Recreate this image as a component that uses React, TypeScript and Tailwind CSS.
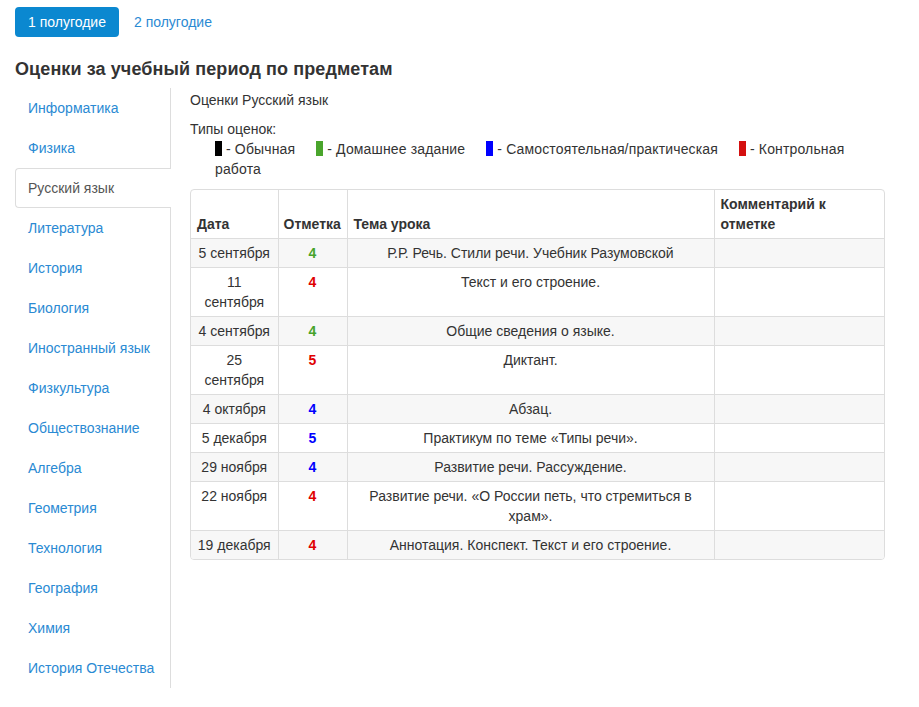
import React from "react";

const subjects = [
  "Информатика",
  "Физика",
  "Русский язык",
  "Литература",
  "История",
  "Биология",
  "Иностранный язык",
  "Физкультура",
  "Обществознание",
  "Алгебра",
  "Геометрия",
  "Технология",
  "География",
  "Химия",
  "История Отечества",
];

type Row = { date: string; mark: string; color: string; topic: string };

const GREEN = "text-[#46a32a]";
const RED = "text-[#e00000]";
const BLUE = "text-[#0000ff]";

const rows: Row[] = [
  { date: "5 сентября", mark: "4", color: GREEN, topic: "Р.Р. Речь. Стили речи. Учебник Разумовской" },
  { date: "11 сентября", mark: "4", color: RED, topic: "Текст и его строение." },
  { date: "4 сентября", mark: "4", color: GREEN, topic: "Общие сведения о языке." },
  { date: "25 сентября", mark: "5", color: RED, topic: "Диктант." },
  { date: "4 октября", mark: "4", color: BLUE, topic: "Абзац." },
  { date: "5 декабря", mark: "5", color: BLUE, topic: "Практикум по теме «Типы речи»." },
  { date: "29 ноября", mark: "4", color: BLUE, topic: "Развитие речи. Рассуждение." },
  { date: "22 ноября", mark: "4", color: RED, topic: "Развитие речи. «О России петь, что стремиться в храм»." },
  { date: "19 декабря", mark: "4", color: RED, topic: "Аннотация. Конспект. Текст и его строение." },
];

export default function App() {
  return (
    <div
      className="min-h-[707px] bg-white px-[15px] pt-[7px] text-[14px] leading-[20px] text-[#333]"
      style={{ fontFamily: '"Liberation Sans", Arial, sans-serif' }}
    >
      <div className="flex items-center">
        <div className="rounded-[4px] bg-[#0b88d0] px-[13px] py-[5px] text-white">1 полугодие</div>
        <div className="ml-[2px] px-[13px] py-[5px] text-[#2a8ad3]">2 полугодие</div>
      </div>

      <h2 className="mt-[22px] mb-[9px] text-[18px] font-bold leading-[20px] tracking-[0.1px] text-[#333]">
        Оценки за учебный период по предметам
      </h2>

      <div className="flex items-start">
        <ul className="w-[156px] shrink-0 border-r border-[#ddd]">
          {subjects.map((s) => {
            const active = s === "Русский язык";
            return (
              <li
                key={s}
                className={
                  active
                    ? "-mr-px rounded-l-[4px] border border-r-0 border-[#ddd] bg-white px-[12px] py-[9px] text-[#555]"
                    : "-mr-px border border-transparent px-[12px] py-[9px] text-[#2a8ad3]"
                }
              >
                {s}
              </li>
            );
          })}
        </ul>

        <div className="w-[714px] pl-[19px]">
          <p className="mt-[2px]">Оценки Русский язык</p>
          <p className="mt-[9px]">Типы оценок:</p>
          <div className="pl-[25px] pr-[30px] tracking-[0.15px]">
            <span className="mr-[21px] whitespace-nowrap">
              <span className="mr-[4px] inline-block h-[15px] w-[7px] bg-black align-[-2px]" />- Обычная
            </span>
            <span className="mr-[21px] whitespace-nowrap">
              <span className="mr-[4px] inline-block h-[15px] w-[7px] bg-[#4aa52c] align-[-2px]" />- Домашнее задание
            </span>
            <span className="mr-[21px] whitespace-nowrap">
              <span className="mr-[4px] inline-block h-[15px] w-[7px] bg-[#0000ff] align-[-2px]" />- Самостоятельная/практическая
            </span>
            <span>
              <span className="mr-[4px] inline-block h-[15px] w-[7px] bg-[#d41010] align-[-2px]" />- Контрольная работа
            </span>
          </div>

          <div className="mt-[10px] w-[695px] overflow-hidden rounded-[4px] border border-[#ddd]">
            <table className="w-full table-fixed border-collapse">
              <colgroup>
                <col className="w-[87px]" />
                <col className="w-[69px]" />
                <col className="w-[367px]" />
                <col />
              </colgroup>
              <thead>
                <tr>
                  <th className="px-[6px] py-[4px] text-left align-bottom font-bold">Дата</th>
                  <th className="border-l border-[#ddd] px-[5px] py-[4px] text-left align-bottom font-bold">Отметка</th>
                  <th className="border-l border-[#ddd] px-[6px] py-[4px] text-left align-bottom font-bold">Тема урока</th>
                  <th className="border-l border-[#ddd] px-[6px] py-[4px] text-left align-bottom font-bold">
                    Комментарий к отметке
                  </th>
                </tr>
              </thead>
              <tbody>
                {rows.map((r, i) => (
                  <tr key={i} className={i % 2 === 0 ? "bg-[#f7f7f7]" : "bg-white"}>
                    <td className="border-t border-[#ddd] px-[5px] py-[4px] text-center align-top">{r.date}</td>
                    <td className={`border-t border-l border-[#ddd] px-[5px] py-[4px] text-center align-top font-bold ${r.color}`}>
                      {r.mark}
                    </td>
                    <td className="border-t border-l border-[#ddd] px-[5px] py-[4px] text-center align-top">{r.topic}</td>
                    <td className="border-t border-l border-[#ddd] px-[5px] py-[4px] align-top"></td>
                  </tr>
                ))}
              </tbody>
            </table>
          </div>
        </div>
      </div>
    </div>
  );
}
